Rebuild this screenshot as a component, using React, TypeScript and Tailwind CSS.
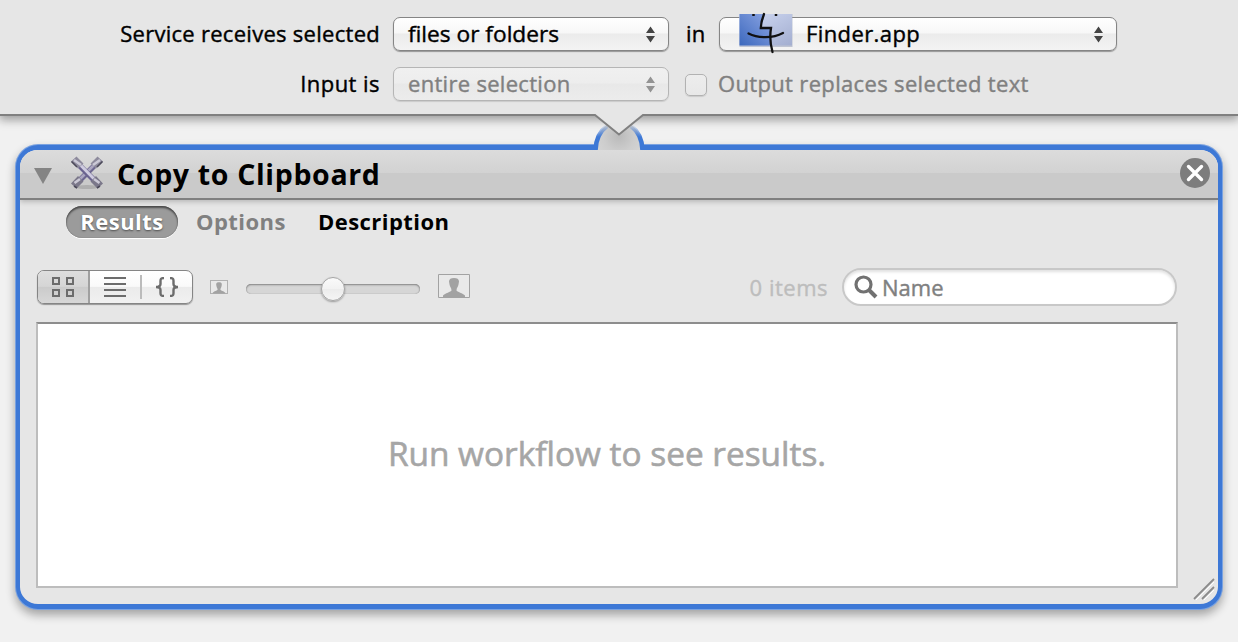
import React from "react";

function Arrows({ className }: { className: string }) {
  return (
    <svg className={className} width="9" height="17" viewBox="0 0 9 17" fill="currentColor">
      <path d="M4.500 0.500 9 7H0zM4.500 16.500 0 10h9z" />
    </svg>
  );
}

function FinderIcon() {
  return (
    <svg className="absolute left-[20px] top-[-4px] overflow-visible" width="54" height="40" viewBox="0 0 54 40">
      <defs>
        <linearGradient id="fl" x1="1" y1="0" x2="0" y2="1">
          <stop offset="0" stopColor="#8da6e4" />
          <stop offset="1" stopColor="#3c68bd" />
        </linearGradient>
        <linearGradient id="fr" x1="0" y1="0" x2="1" y2="1">
          <stop offset="0" stopColor="#d3dcf5" />
          <stop offset="1" stopColor="#a3aed0" />
        </linearGradient>
      </defs>
      <path d="M-.5 0H52.500V33H-.5z" fill="#aab1c5" opacity=".7" />
      <path d="M-.5 0H52V31.500H-.5z" fill="url(#fr)" />
      <path d="M-.5 0H25L21 14H31L30 23 31 31.500H-.5z" fill="url(#fl)" />
      <path d="M13.500 0v2M36 0v2" stroke="#111" strokeWidth="2.500" />
      <path d="M24 0C22 5 21 9 20.800 14H31C29.500 23 30.500 31 32.500 38" fill="none" stroke="#111" strokeWidth="2.300" strokeLinecap="round" />
      <path d="M8.500 19.500C18 24.500 33 24.500 43 19" fill="none" stroke="#111" strokeWidth="2.300" strokeLinecap="round" />
    </svg>
  );
}

function ToolsIcon() {
  return (
    <svg width="36" height="36" viewBox="0 0 36 36">
      <ellipse cx="18" cy="32" rx="12" ry="2" fill="#888" opacity=".4" />
      <path d="M28 8 8 28" stroke="#6d6790" strokeWidth="5.500" />
      <path d="M28 7 8 27" stroke="#aaa6c0" strokeWidth="2.600" />
      <path d="M8 8 28 28" stroke="#6a638f" strokeWidth="5.500" />
      <path d="M9 7.500 28 27" stroke="#cfcce0" strokeWidth="3" />
      <path d="M2 6.500 7.500 1.500 14.500 8.500 9 13.500zM34 6.500 28.500 1.500 21.500 8.500 27 13.500z" fill="#8d8a9c" />
      <path d="M2 28.500 9 21 14.500 26.500 7.500 33.500zM34 28.500 27 21 21.500 26.500 28.500 33.500z" fill="#7b788a" />
      <path d="M5 5 12 10M31 5 24 10M5.500 28 11 24M30.500 28 25 24" stroke="#cbc9d6" strokeWidth="2.600" />
      <path d="M2.500 6.500 8 12M33.500 6.500 28 12M5 31 8 33M31 31 28 33" stroke="#4b4959" strokeWidth="1.600" />
    </svg>
  );
}

function Portrait({ w, h }: { w: number; h: number }) {
  return (
    <svg width={w} height={h} viewBox="0 0 32 24" preserveAspectRatio="none">
      <rect x=".5" y=".5" width="31" height="23" fill="#e9e9e9" stroke="#a2a2a2" vectorEffect="non-scaling-stroke" />
      <path d="M5 23V21.500C7 19 13 18 13.500 16.500 13.500 14 12 13 11.500 10.500L11 7.500C11 5 13 4 16 4s5 1 5 3.500L20.500 10.500C20 13 18.500 14 18.500 16.500 19 18 25 19 27 21.500V23z" fill="#a2a2a2" />
    </svg>
  );
}

function Notch() {
  return (
    <svg className="absolute left-[585px] top-[112px]" width="68" height="40" viewBox="0 0 68 40">
      <defs>
        <linearGradient id="arc" x1="0" y1="13" x2="0" y2="25" gradientUnits="userSpaceOnUse">
          <stop offset="0" stopColor="#3d78d6" stopOpacity=".05" />
          <stop offset="1" stopColor="#3d78d6" />
        </linearGradient>
        <radialGradient id="bump" cx="34" cy="24" r="26" gradientUnits="userSpaceOnUse">
          <stop offset="0" stopColor="#bababa" />
          <stop offset=".6" stopColor="#cdcdcd" />
          <stop offset="1" stopColor="#d4d4d4" />
        </radialGradient>
      </defs>
      <path d="M10 38C11 25 16 16 23 12H45C52 16 57 25 58 38z" fill="url(#bump)" />
      <path d="M10.500 38C11 27 15 19 22 14M57.500 38C57 27 53 19 46 14" fill="none" stroke="url(#arc)" strokeWidth="4.600" />
      <path d="M8 0H60V2L34 22.500 8 2z" fill="#e6e6e6" />
      <path d="M0 3H10L34 22.500 58 3H68" fill="none" stroke="#808080" strokeWidth="2" />
    </svg>
  );
}

export default function App() {
  return (
    <div className="relative flex h-[642px] w-[1238px] flex-col overflow-hidden bg-[#f1f1f1] font-['Open_Sans','Noto_Sans',sans-serif] text-[22px] text-black [-webkit-text-stroke:0.4px_currentColor]">
      <header className="h-[116px] w-full shrink-0 border-b-2 border-[#808080] bg-[#e6e6e6] pt-[17px] shadow-[0_3px_9px_1px_rgba(0,0,0,0.35)]">
        <div className="flex h-[34px] items-center">
          <div className="mt-[-2px] w-[380px] text-right leading-[32px] tracking-[0.28px]">Service receives selected</div>
          <div className="ml-[13px] flex h-[34px] w-[276px] items-center justify-between rounded-[7px] border border-[#858585] bg-[linear-gradient(#fff,#f7f7f7_47%,#ebebeb_50%,#f3f3f3)] pl-[14px] pr-[13px] shadow-[0_1px_1px_rgba(0,0,0,0.35)]">
            <span className="text-[22.7px] leading-[32px]">files or folders</span>
            <Arrows className="text-[#444]" />
          </div>
          <div className="ml-[17px] mt-[-2px] w-[33px] leading-[32px] tracking-[0.3px]">in</div>
          <div className="relative flex h-[34px] w-[398px] items-center justify-between rounded-[7px] border border-[#858585] bg-[linear-gradient(#fff,#f7f7f7_47%,#ebebeb_50%,#f3f3f3)] pl-[86px] pr-[13px] shadow-[0_1px_1px_rgba(0,0,0,0.35)]">
            <FinderIcon />
            <span className="mt-[-2px] leading-[32px] tracking-[0.4px]">Finder.app</span>
            <Arrows className="text-[#444]" />
          </div>
        </div>
        <div className="mt-[16px] flex h-[34px] items-center">
          <div className="mt-[-2px] w-[380px] text-right leading-[32px] tracking-[0.45px]">Input is</div>
          <div className="ml-[13px] flex h-[34px] w-[276px] items-center justify-between rounded-[7px] border border-[#b5b5b5] bg-[linear-gradient(#f0f0f0,#ededed_47%,#e8e8e8_50%,#ececec)] pl-[14px] pr-[13px] text-[#808080] shadow-[0_1px_1px_rgba(0,0,0,0.12)]">
            <span className="mt-[-2px] leading-[32px] tracking-[0.3px]">entire selection</span>
            <Arrows className="text-[#939393]" />
          </div>
          <div className="ml-[16px] mt-[1px] size-[22px] rounded-[5px] border border-[#b2b2b2] bg-[linear-gradient(#ededed,#e8e8e8)] shadow-[0_1px_1px_rgba(0,0,0,0.12)]" />
          <span className="ml-[11px] mt-[-2px] whitespace-nowrap leading-[32px] tracking-[0.34px] text-[#808080]">Output replaces selected text</span>
        </div>
      </header>

      <main className="ml-[16px] mt-[29px] flex h-[464px] w-[1206px] flex-col overflow-hidden rounded-[22px] border-x-[4px] border-y-[5px] border-[#3d78d6] bg-[#e6e6e6] shadow-[0_0_0_1px_#7aa2e0,0_5px_10px_1px_rgba(0,0,0,0.32)]">
        <div className="flex h-[50px] shrink-0 items-center border-b-2 border-[#808080] bg-[linear-gradient(#dcdcdc,#d2d2d2_23px,#cacaca_23px,#cacaca)] pl-[14px] pr-[8px] shadow-[0_2px_5px_rgba(0,0,0,0.2)]">
          <svg className="mt-[3px]" width="18" height="16" viewBox="0 0 18 16"><path d="M0 0H18L9 16z" fill="#848484" /></svg>
          <div className="ml-[17px] mt-[-2px]"><ToolsIcon /></div>
          <h1 className="ml-[12px] whitespace-nowrap text-[28.5px] font-bold leading-[46px] tracking-[0.66px] [-webkit-text-stroke:0px]">Copy to Clipboard</h1>
          <svg className="mb-[3px] ml-auto" width="30" height="30" viewBox="0 0 30 30">
            <circle cx="15" cy="15" r="15" fill="#7d7d7d" />
            <path d="M8.500 8.500 21.500 21.500M21.500 8.500 8.500 21.500" stroke="#fff" strokeWidth="3.400" strokeLinecap="round" />
          </svg>
        </div>
        <nav className="mt-[6px] flex h-[32px] shrink-0 items-center pl-[46px] font-bold leading-[30px] tracking-[0.45px] [-webkit-text-stroke:0px]">
          <div className="h-[32px] w-[112px] rounded-full bg-[#9b9b9b] text-center text-white shadow-[inset_0_2px_2px_rgba(0,0,0,0.5),inset_0_0_1px_rgba(0,0,0,0.5),0_1px_0_#fff] [text-shadow:0_1px_2px_rgba(0,0,0,0.5)]">Results</div>
          <div className="ml-[18px] mt-[-2px] w-[122px] text-[#808080]">Options</div>
          <div className="mt-[-2px]">Description</div>
        </nav>
        <div className="mt-[30px] flex h-[38px] shrink-0 items-center pl-[17px]">
          <div className="flex h-[34px] w-[156px] items-center overflow-hidden rounded-[7px] border border-[#858585] bg-[linear-gradient(#fff,#fafafa_48%,#ebebeb_51%,#f1f1f1)] text-[#6c6c6c] shadow-[0_1px_1px_rgba(0,0,0,0.35)]">
            <div className="flex h-full w-[52px] items-center justify-center border-r-2 border-[#a0a0a0] bg-[linear-gradient(#dedede,#d5d5d5_48%,#cbcbcb_51%,#d7d7d7)]">
              <svg width="22" height="20" viewBox="0 0 22 20" fill="none" stroke="currentColor" strokeWidth="2"><path d="M1 1H7V7H1zM15 1H21V7H15zM1 13H7V19H1zM15 13H21V19H15z" /></svg>
            </div>
            <div className="flex w-[50px] justify-center">
              <svg width="22" height="20" viewBox="0 0 22 20" stroke="currentColor" strokeWidth="2"><path d="M0 1H22M0 7H22M0 13H22M0 19H22" /></svg>
            </div>
            <div className="h-[24px] w-[2px] bg-[#bbb]" />
            <div className="flex flex-1 justify-center">
              <svg width="22" height="20" viewBox="0 0 22 20" fill="none" stroke="currentColor" strokeWidth="2.400"><path d="M8 1C5 1 4.500 2 4.500 4V7C4.500 9 3 10 0 10 3 10 4.500 11 4.500 13V16C4.500 18 5 19 8 19M14 1C17 1 17.500 2 17.500 4V7C17.500 9 19 10 22 10 19 10 17.500 11 17.500 13V16C17.500 18 17 19 14 19" /></svg>
            </div>
          </div>
          <div className="ml-[17px]"><Portrait w={18} h={14} /></div>
          <div className="ml-[18px] mt-[3px] flex h-[10px] w-[174px] items-center rounded-full bg-[#d6d6d6] shadow-[inset_0_1px_2px_rgba(0,0,0,0.38),inset_0_0_1px_#999]">
            <div className="ml-[75px] size-[24px] shrink-0 rounded-full border border-[#a5a5a5] bg-[linear-gradient(#fafafa,#f2f2f2_50%,#ececec_52%,#f5f5f5)] shadow-[0_1px_2px_rgba(0,0,0,0.35)]" />
          </div>
          <div className="ml-[18px] mt-[-2px]"><Portrait w={32} h={24} /></div>
          <span className="ml-auto tracking-[0.5px] text-[#bdbdbd]">0 items</span>
          <div className="ml-[14px] mr-[41px] flex h-[38px] w-[335px] items-center rounded-full border-2 border-[#c8c8c8] bg-white pl-[10px] text-[#808080] shadow-[inset_0_2px_3px_rgba(0,0,0,0.12)]">
            <svg width="24" height="24" viewBox="0 0 24 24" fill="none" stroke="#717171"><circle cx="9.500" cy="9.500" r="7.500" strokeWidth="3.200" /><path d="M15 15 22 22" strokeWidth="4" /></svg>
            <span className="ml-[4px]">Name</span>
          </div>
        </div>
        <div className="ml-[16px] mt-[16px] flex h-[266px] w-[1142px] shrink-0 items-center justify-center border-2 border-[#bdbdbd] border-t-[#8d8d8d] bg-white">
          <p className="mt-[-4px] whitespace-nowrap text-[33.400px] text-[#a6a6a6] [-webkit-text-stroke:0.6px_currentColor]">Run workflow to see results.</p>
        </div>
      </main>

      <svg className="absolute left-[1192px] top-[577px]" width="24" height="24" viewBox="0 0 24 24" stroke="#8b8b8b" strokeWidth="1.800">
        <path d="M2 22 22 2M10 22 22 10" />
        <path d="M4 23 22 5M12 23 22 13" stroke="#fff" strokeWidth="1" />
      </svg>
      <Notch />
    </div>
  );
}
